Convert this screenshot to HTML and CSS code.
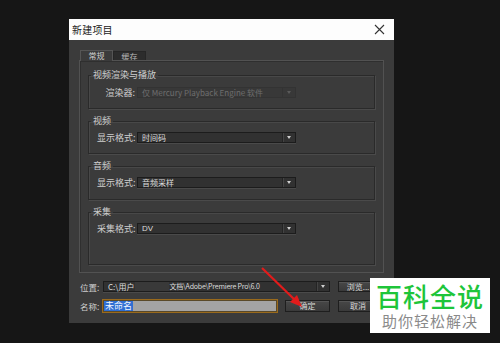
FILE: index.html
```html
<!DOCTYPE html>
<html lang="zh">
<head>
<meta charset="utf-8">
<link rel="stylesheet" href="styles.css">
</head>
<body>
<div class="dialog">
  <div class="titlebar">
    <span class="title">新建项目</span>
    <svg class="close" width="11" height="11" viewBox="0 0 11 11"><path d="M1 1L10 10M10 1L1 10" stroke="#333" stroke-width="1.1" fill="none"/></svg>
  </div>
  <div class="body">
    <div class="tabs">
      <div class="tab active">常规</div>
      <div class="tab">缓存</div>
    </div>
    <div class="panel">
      <fieldset class="group g1">
        <legend>视频渲染与播放</legend>
        <div class="row"><span class="lbl lbl-r">渲染器:</span><div class="select disabled"><span class="val">仅 Mercury Playback Engine 软件</span><span class="arrow"></span></div></div>
      </fieldset>
      <fieldset class="group g2">
        <legend>视频</legend>
        <div class="row"><span class="lbl">显示格式:</span><div class="select"><span class="val">时间码</span><span class="arrow"></span></div></div>
      </fieldset>
      <fieldset class="group g3">
        <legend>音频</legend>
        <div class="row"><span class="lbl">显示格式:</span><div class="select"><span class="val">音频采样</span><span class="arrow"></span></div></div>
      </fieldset>
      <fieldset class="group g4">
        <legend>采集</legend>
        <div class="row"><span class="lbl">采集格式:</span><div class="select"><span class="val latin">DV</span><span class="arrow"></span></div></div>
      </fieldset>
    </div>
    <div class="bottom-row loc">
      <span class="blbl">位置:</span>
      <div class="select path"><span class="val">C:\用户</span><span class="blur"></span><span class="val rest">文档\Adobe\Premiere Pro\6.0</span><span class="arrow"></span></div>
      <div class="btn">浏览...</div>
    </div>
    <div class="bottom-row name">
      <span class="blbl">名称:</span>
      <div class="namefield"><span class="sel">未命名</span></div>
      <div class="btn ok">确定</div>
      <div class="btn">取消</div>
    </div>
  </div>
</div>
<svg class="red-arrow" width="60" height="50" viewBox="0 0 60 50"><path d="M3 2L38 36" stroke="#e21b1b" stroke-width="2.2" fill="none"/><path d="M43 41L31 36L38 29Z" fill="#e21b1b"/></svg>
<div class="watermark">
  <div class="wm-main">百科全说</div>
  <div class="wm-sub">助你轻松解决</div>
</div>
</body>
</html>
```
FILE: styles.css
```css
html, body { margin: 0; padding: 0; }
body {
  width: 500px; height: 343px; overflow: hidden;
  background: #161616;
  font-family: "Noto Sans CJK SC", "Liberation Sans", sans-serif;
  position: relative;
}
.dialog {
  margin: 19px 0 0 69px;
  width: 325px; height: 304px;
  background: #3b3b3b;
  display: flex; flex-direction: column;
}
.titlebar {
  height: 21px; background: #fdfdfd;
  display: flex; align-items: center; justify-content: space-between;
  padding: 0 9px 0 3px;
  box-sizing: border-box;
}
.title { font-size: 10px; color: #222; line-height: 21px; letter-spacing: 0.2px; }
.close { display: block; }
.body { padding: 10px 10px 0 10px; display: flex; flex-direction: column; }
.tabs { display: flex; height: 10px; margin-left: 1px; }
.tab {
  width: 33px; box-sizing: border-box;
  font-size: 8px; text-align: center; color: #b8b8b8;
  background: #2c2c2c; border: 1px solid #262626; border-bottom: none;
  margin-top: 1px; height: 9px; line-height: 9px;
}
.tab.active { background: #3b3b3b; color: #d0d0d0; border-color: #555; margin-top: 0; height: 11px; line-height: 10px; position: relative; z-index: 1; }
.panel {
  height: 213px; box-sizing: border-box;
  border: 1px solid #525252;
  box-shadow: inset 1px 1px 0 #2f2f2f;
  padding: 9px 8px 0 8px;
  display: flex; flex-direction: column; gap: 7px;
}
.group {
  margin: 0; min-inline-size: 0;
  border: 1px solid #2a2a2a;
  box-shadow: 1px 1px 0 #4a4a4a, inset 1px 1px 0 #484848;
  padding: 6px 0 10px 0;
}
.group legend {
  font-size: 9px; line-height: 10px; color: #cfcfcf;
  padding: 0 2px; margin-left: 2px;
}
.g1 { padding-top: 7px; }
.g3 { padding-bottom: 11px; }
.g4 { padding-bottom: 30px; }
.row { display: flex; align-items: center; height: 11px; }
.lbl { width: 40px; margin-left: 8px; font-size: 9px; color: #cfcfcf; line-height: 11px; white-space: nowrap; }
.lbl-r { text-align: right; width: 38px; margin-left: 8px; margin-right: 2px; }
.select {
  position: relative;
  width: 159px; height: 11px; box-sizing: border-box;
  background: #313131; border: 1px solid #1c1c1c;
  box-shadow: 0 1px 0 #4a4a4a;
  display: flex; align-items: center;
  font-size: 8px; color: #dcdcdc; line-height: 9px;
}
.select .val { padding-left: 4px; white-space: nowrap; }
.latin { font-family: "Liberation Sans", sans-serif; }
.select.disabled { background: #383838; color: #6e6e6e; border-color: #333; box-shadow: none; }
.select .arrow {
  margin-left: auto; width: 12px; height: 100%;
  border-left: 1px solid #242424;
  box-shadow: inset 1px 0 0 #444;
  display: flex; align-items: center; justify-content: center;
}
.select .arrow::after {
  content: ""; border-left: 2.5px solid transparent; border-right: 2.5px solid transparent; border-top: 3px solid #cfcfcf;
}
.select.disabled .arrow { border-left-color: #333; box-shadow: none; }
.select.disabled .arrow::after { border-top-color: #5a5a5a; }
.bottom-row { display: flex; align-items: center; }
.loc { margin-top: 8px; height: 11px; }
.name { margin-top: 7px; height: 14px; }
.blbl { width: 23px; margin-left: 1px; font-size: 8.5px; color: #cfcfcf; white-space: nowrap; }
.select.path { width: 227px; }
.path .val { font-size: 8px; }
.path .blur { width: 34px; height: 9px; background: #393939; margin-left: 1px; }
.path .val.rest { padding-left: 0; font-size: 7px; letter-spacing: -0.2px; }
.btn {
  width: 40px; height: 11px; box-sizing: border-box;
  margin-left: 8px;
  background: linear-gradient(#474747, #3a3a3a);
  border: 1px solid #1e1e1e;
  box-shadow: inset 0 1px 0 #555;
  font-size: 8px; color: #d8d8d8; line-height: 9px; text-align: center;
}
.name .btn { height: 12px; line-height: 10px; }
.btn.ok { width: 45px; margin-left: 7px; }
.namefield {
  width: 176px; height: 14px; box-sizing: border-box; margin-left: -1px;
  border: 1px solid #9a6a1c;
  background: #a4a4a4;
  box-shadow: inset 0 0 0 1px #5a4a2a;
  padding: 1px 1px;
  display: flex; align-items: center;
}
.sel { background: #2f6ed2; color: #f2f6ff; font-size: 9px; line-height: 10px; padding: 0 1px; }
.red-arrow { position: absolute; left: 259px; top: 266px; }
.watermark {
  position: absolute; left: 370px; top: 278px;
  width: 120px; height: 55px; background: #fff;
  display: flex; flex-direction: column; align-items: center;
}
.wm-main { font-size: 26px; line-height: 28px; height: 28px; color: #1ec53a; font-weight: 500; letter-spacing: 1px; margin-top: 4px; }
.wm-sub { font-size: 15px; line-height: 18px; height: 18px; color: #8a8a8a; letter-spacing: 1px; margin-top: 2px; }
```
